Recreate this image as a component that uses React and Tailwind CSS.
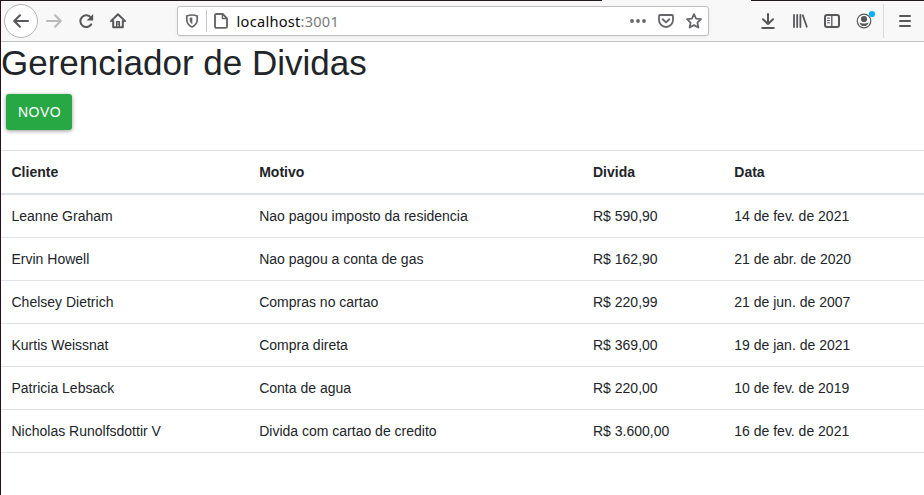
import React from "react";

const debts = [
  ["Leanne Graham", "Nao pagou imposto da residencia", "R$ 590,90", "14 de fev. de 2021"],
  ["Ervin Howell", "Nao pagou a conta de gas", "R$ 162,90", "21 de abr. de 2020"],
  ["Chelsey Dietrich", "Compras no cartao", "R$ 220,99", "21 de jun. de 2007"],
  ["Kurtis Weissnat", "Compra direta", "R$ 369,00", "19 de jan. de 2021"],
  ["Patricia Lebsack", "Conta de agua", "R$ 220,00", "10 de fev. de 2019"],
  ["Nicholas Runolfsdottir V", "Divida com cartao de credito", "R$ 3.600,00", "16 de fev. de 2021"],
];

const columns = "grid grid-cols-[247.7px_333.8px_141.3px_200px]";

function Icon({ children, className = "text-[#58585a]" }) {
  return (
    <svg
      viewBox="0 0 16 16"
      className={`block size-4 shrink-0 overflow-visible ${className}`}
      fill="none"
      stroke="currentColor"
      strokeWidth="2"
      strokeLinecap="round"
      strokeLinejoin="round"
    >
      {children}
    </svg>
  );
}

function AddressBar() {
  return (
    <div className="ml-[51px] flex h-[30px] w-[532px] items-center rounded-[3px] border border-[#bfbfbf] bg-white pl-1.5 shadow-[0_1px_4px_rgba(0,0,0,0.06)]">
      <Icon className="text-[#66666a]">
        <path d="M8 2C9.6 2 11.6 2.3 13.2 3v3.6c0 3.4-1.9 6-5.2 7.4-3.3-1.4-5.2-4-5.2-7.4V3C4.400 2.300 6.400 2 8 2z" strokeWidth="1.7" />
        <path d="M8.300 4.600C7.300 4.600 6.300 4.700 5.600 5v1.800c0 1.900 1 3.400 2.700 4.400z" fill="currentColor" stroke="none" />
      </Icon>
      <div className="ml-1.5 h-[22px] w-px bg-[#c4c4c4]" />
      <Icon className="ml-1.5 text-[#66666a]">
        <path d="M3.4 1h6.300L14 5.3V13.5a1.4 1.4 0 0 1-1.4 1.4H3.4A1.4 1.4 0 0 1 2 13.5V2.4A1.4 1.4 0 0 1 3.4 1z" strokeWidth="1.9" />
        <path d="M9.4 1.4V5.5H13.6" strokeWidth="1.4" />
      </Icon>
      <span className="ml-[7.6px] font-['Noto_Sans',sans-serif] text-[14.6px] leading-5 tracking-[0.25px] whitespace-nowrap text-[#0c0c0d]">
        localhost<span className="text-[#7b7b7b]">:3001</span>
      </span>
      <div className="mr-1.5 ml-auto flex gap-3">
        <Icon className="text-[#66666a]">
          <g fill="currentColor" stroke="none">
            <circle cx="2" cy="8" r="1.9" />
            <circle cx="8" cy="8" r="1.9" />
            <circle cx="14" cy="8" r="1.9" />
          </g>
        </Icon>
        <Icon className="text-[#66666a]">
          <path d="M2 2h12a1 1 0 0 1 1 1v4a7 7 0 0 1-14 0V3a1 1 0 0 1 1-1z" strokeWidth="1.8" />
          <path d="M4.7 6.3 8 9.4l3.3-3.1" strokeWidth="1.9" />
        </Icon>
        <Icon className="text-[#66666a]">
          <path d="m8 1.1 2.1 4.5 4.9.6-3.6 3.4 1 4.9L8 12.1l-4.4 2.4 1-4.9L1 6.2l4.9-.6z" strokeWidth="1.8" />
        </Icon>
      </div>
    </div>
  );
}

function Toolbar() {
  return (
    <header className="flex h-[42px] flex-col border-b border-[#c3c3c3] bg-[#f8f8f8]">
      <div className="flex h-px shrink-0 justify-between">
        <div className="w-[601px] bg-[#211b21]" />
        <div className="w-[173px] bg-[#211b21]" />
      </div>
      <div className="flex h-10 items-center pl-[3px]">
        <div className="flex size-[34px] shrink-0 items-center justify-center rounded-full border border-[#b5b5b5] bg-white">
          <Icon>
            <path d="M15 8H1.4M7 2.2 1.2 8 7 13.8" />
          </Icon>
        </div>
        <Icon className="ml-2 text-[#b9b9b9]">
          <path d="M1 8h13.6M9 2.2 14.8 8 9 13.8" />
        </Icon>
        <Icon className="ml-4 text-[#58585a]">
          <path d="M13.2 11.4a5.9 5.9 0 1 1-.3-6.9" />
          <path d="M15.2 1v6.6H8.6z" fill="currentColor" stroke="none" />
        </Icon>
        <Icon className="ml-4 text-[#58585a]">
          <path d="M1 8.1 8 1.2l7 6.900M3.200 8v6.200h9.600V8" />
          <path d="M6.700 13.500V8.700h2.600v4.800" strokeWidth="1.500" />
          <path d="M8.200 10.800v.8" strokeWidth="1.200" />
        </Icon>
        <AddressBar />
        <div className="ml-[51px] flex items-center gap-4">
          <Icon>
            <path d="M8 1v9.8M3 6.2l5 4.8 5-4.8M2.2 15h11.6" />
          </Icon>
          <Icon>
            <path d="M2 2v12M5.2 2v12M8.4 2v12M10.8 2.3l4 11.4" strokeWidth="1.8" />
          </Icon>
          <Icon>
            <rect x="1" y="2" width="14" height="12" rx="2" />
            <path d="M7.8 2v12" strokeWidth="1.3" />
            <path d="M3.5 5.2h2M3.5 7.5h2M3.5 9.8h2" strokeWidth="1" />
          </Icon>
          <Icon>
            <circle cx="8" cy="8" r="6.8" strokeWidth="1.2" />
            <circle cx="8" cy="6" r="3.1" fill="currentColor" stroke="none" />
            <path d="M3.500 9.200c1.200 1.100 2.800 1.200 4.500 1.200s3.300-.1 4.500-1.200c-.2 2.400-2 3.900-4.500 3.900S3.700 11.600 3.500 9.200z" fill="currentColor" stroke="none" />
            <circle cx="16" cy="1" r="3.1" fill="#00b3f4" stroke="none" />
          </Icon>
        </div>
        <div className="ml-[11px] h-[34px] w-px bg-[#d9d9d9]" />
        <Icon className="ml-[13px] text-[#58585a]">
          <path d="M3 3h10M3 8h10M3 13h10" />
        </Icon>
      </div>
    </header>
  );
}

export default function App() {
  return (
    <div className="flex h-[495px] w-[924px] overflow-hidden bg-white font-['Liberation_Sans',Arial,sans-serif] text-sm text-[#212529]">
      <div className="w-px shrink-0 bg-[#2c1022]" />
      <div className="w-[923px]">
        <Toolbar />
        <main>
          <h1 className="text-[35px] leading-[42px] whitespace-nowrap">Gerenciador de Dividas</h1>
          <button className="mt-2.5 ml-[5px] flex h-9 w-[66px] items-center justify-center rounded-[3px] bg-[#28a745] pl-px text-sm font-normal tracking-[0.5px] text-white shadow-[0_1px_4px_rgba(0,0,0,0.4)]">
            NOVO
          </button>
          <div role="table" className="mt-5 border-t border-[#dee2e6]">
            <div role="row" className={`${columns} h-11 border-b-2 border-[#dee2e6] font-bold`}>
              {["Cliente", "Motivo", "Divida", "Data"].map((heading) => (
                <div role="columnheader" key={heading} className="pl-[10.5px] leading-[42px]">
                  {heading}
                </div>
              ))}
            </div>
            {debts.map((debt) => (
              <div role="row" key={debt[0]} className={`${columns} h-[43px] border-b border-[#dee2e6]`}>
                {debt.map((value) => (
                  <div role="cell" key={value} className="pl-[10.5px] leading-[42px] whitespace-nowrap">
                    {value}
                  </div>
                ))}
              </div>
            ))}
          </div>
        </main>
      </div>
    </div>
  );
}
